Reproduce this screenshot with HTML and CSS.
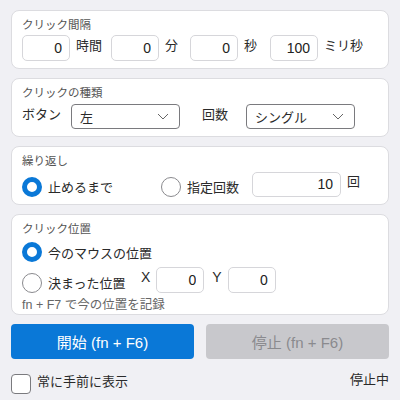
FILE: index.html
```html
<!DOCTYPE html>
<html lang="ja">
<head>
    <meta charset="UTF-8">
    <meta name="viewport" content="width=device-width, initial-scale=1.0">
    <title>オートクリッカー</title>
    <link rel="stylesheet" href="styles.css">
</head>
<body>
    <div class="panel">
        <section class="group">
            <div class="group-title">クリック間隔</div>
            <div class="row">
                <input class="num" type="text" value="0">
                <span class="unit unit-hour">時間</span>
                <input class="num" type="text" value="0">
                <span class="unit unit-min">分</span>
                <input class="num" type="text" value="0">
                <span class="unit unit-sec">秒</span>
                <input class="num" type="text" value="100">
                <span class="unit">ミリ秒</span>
            </div>
        </section>

        <section class="group">
            <div class="group-title">クリックの種類</div>
            <div class="row">
                <span class="label label-button">ボタン</span>
                <div class="select">
                    <span>左</span>
                    <svg width="12" height="7" viewBox="0 0 12 7"><path d="M1 1l5 5 5-5" fill="none" stroke="#666" stroke-width="1"/></svg>
                </div>
                <span class="label label-count">回数</span>
                <div class="select">
                    <span>シングル</span>
                    <svg width="12" height="7" viewBox="0 0 12 7"><path d="M1 1l5 5 5-5" fill="none" stroke="#666" stroke-width="1"/></svg>
                </div>
            </div>
        </section>

        <section class="group">
            <div class="group-title">繰り返し</div>
            <div class="row">
                <label class="choice choice-until">
                    <input type="radio" name="repeat" checked>
                    <span>止めるまで</span>
                </label>
                <label class="choice">
                    <input type="radio" name="repeat">
                    <span>指定回数</span>
                </label>
                <input class="num num-times" type="text" value="10">
                <span class="unit">回</span>
            </div>
        </section>

        <section class="group group-pos">
            <div class="group-title">クリック位置</div>
            <label class="choice row-mouse">
                <input type="radio" name="pos" checked>
                <span>今のマウスの位置</span>
            </label>
            <div class="row">
                <label class="choice choice-fixed">
                    <input type="radio" name="pos">
                    <span>決まった位置</span>
                </label>
                <span class="axis">X</span>
                <input class="num" type="text" value="0">
                <span class="axis axis-y">Y</span>
                <input class="num" type="text" value="0">
            </div>
            <div class="note">fn + F7 で今の位置を記録</div>
        </section>

        <div class="actions">
            <button class="btn btn-start">開始 (fn + F6)</button>
            <button class="btn btn-stop" disabled>停止 (fn + F6)</button>
        </div>

        <div class="footer">
            <label class="check">
                <input type="checkbox">
                <span>常に手前に表示</span>
            </label>
            <span class="status">停止中</span>
        </div>
    </div>
</body>
</html>
```

FILE: styles.css
```css
body {
    margin: 0;
    padding: 10px 11px 0 11px;
    background-color: #f0f0f4;
    font-family: "Liberation Sans", "Noto Sans CJK JP", sans-serif;
    color: #2a2a2a;
    font-size: 13px;
}

.panel {
    display: flex;
    flex-direction: column;
    gap: 9px;
}

.group {
    background-color: #fff;
    border: 1px solid #dcdce0;
    border-radius: 8px;
    padding: 6px 10px 7px 10px;
}

.group-title {
    font-size: 11.5px;
    line-height: 16px;
    color: #555;
    margin-bottom: 2px;
}

.row {
    display: flex;
    align-items: center;
    gap: 6px;
    height: 26px;
}

.num {
    box-sizing: border-box;
    width: 48px;
    height: 26px;
    padding: 0 7px 0 0;
    border: 1px solid #d6d6da;
    border-radius: 5px;
    font-family: inherit;
    font-size: 14px;
    color: #222;
    text-align: right;
    background: #fff;
    outline: none;
}

.unit {
    line-height: 16px;
    margin-top: -4px;
}

.unit-hour {
    width: 29px;
}

.unit-min {
    width: 19px;
}

.unit-sec {
    width: 20px;
}

.label {
    line-height: 16px;
    margin-top: -3px;
}

.label-button {
    width: 43px;
}

.label-count {
    margin-left: 16px;
    width: 38px;
}

.select {
    box-sizing: border-box;
    width: 109px;
    height: 25px;
    display: flex;
    align-items: center;
    justify-content: space-between;
    padding: 0 10px 0 8px;
    border: 1px solid #7a7a7e;
    border-radius: 4px;
    font-size: 13px;
}

.choice {
    display: flex;
    align-items: center;
    gap: 6px;
    font-size: 13px;
}

.choice input[type="radio"] {
    appearance: none;
    -webkit-appearance: none;
    box-sizing: border-box;
    width: 20px;
    height: 20px;
    margin: 0;
    border: 1px solid #8a8a8e;
    border-radius: 50%;
    background: #fff;
}

.choice input[type="radio"]:checked {
    border: 5.5px solid #0a78d7;
}

.choice-until {
    width: 133px;
    margin-top: 5px;
}

.choice-until + .choice {
    width: 85px;
    margin-top: 5px;
}

.num-times {
    width: 89px;
    height: 25px;
}

.group-pos {
    padding-top: 6px;
    padding-bottom: 1px;
}

.group-pos .group-title {
    margin-bottom: 3px;
}

.row-mouse {
    height: 24px;
    margin-bottom: 3px;
}

.choice-fixed {
    width: 113px;
    margin-top: 5px;
}

.axis {
    font-size: 14px;
    margin-top: -7px;
}

.axis-y {
    margin-left: 2px;
}

.note {
    font-size: 12.5px;
    line-height: 16px;
    color: #666;
    margin-top: 4px;
}

.actions {
    display: flex;
    gap: 12px;
}

.btn {
    flex: 1;
    height: 35px;
    border: none;
    border-radius: 4px;
    font-family: inherit;
    font-size: 15px;
}

.btn-start {
    background-color: #0a78d7;
    color: #fff;
}

.btn-stop {
    background-color: #c8c8cc;
    color: #8a8a8e;
}

.footer {
    display: flex;
    align-items: center;
    justify-content: space-between;
    margin-top: 6px;
}

.check {
    display: flex;
    align-items: center;
    gap: 6px;
    font-size: 13px;
}

.check input {
    appearance: none;
    -webkit-appearance: none;
    width: 20px;
    height: 20px;
    margin: 0;
    border: 1px solid #7a7a7e;
    border-radius: 4px;
    background: #fff;
}

.check span {
    margin-top: -8px;
}

.status {
    font-size: 13px;
    margin-top: -12px;
}
```
